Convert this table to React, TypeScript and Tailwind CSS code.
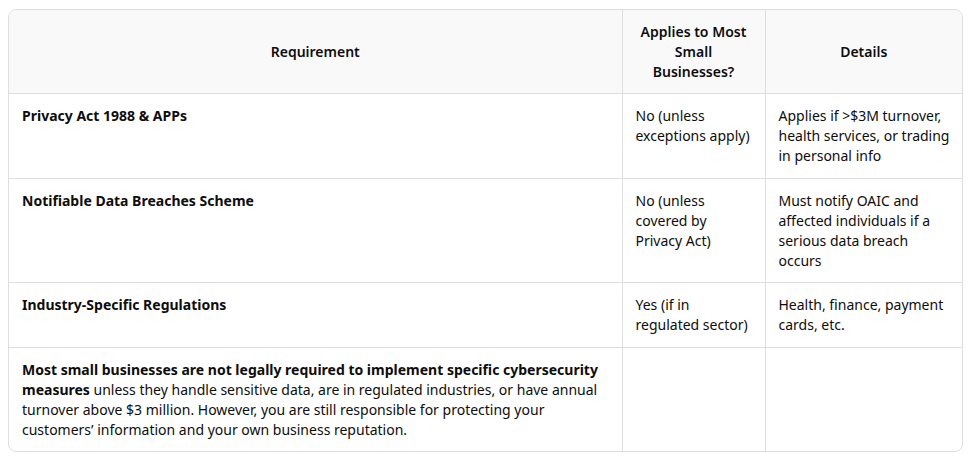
import React from "react";

const rows = [
  {
    req: "Privacy Act 1988 & APPs",
    applies: "No (unless exceptions apply)",
    details: ["Applies if >$3M turnover,", "health services, or trading", "in personal info"],
    pad: "pt-3 pb-3",
  },
  {
    req: "Notifiable Data Breaches Scheme",
    applies: "No (unless covered by Privacy Act)",
    details: ["Must notify OAIC and", "affected individuals if a", "serious data breach", "occurs"],
    pad: "pt-3 pb-[11px]",
  },
  {
    req: "Industry-Specific Regulations",
    applies: "Yes (if in regulated sector)",
    details: ["Health, finance, payment", "cards, etc."],
    pad: "pt-3 pb-3",
  },
];

export default function App() {
  return (
    <div
      className="bg-white w-[972px] h-[457px] pl-2 pr-[9px] pt-[9px] text-[14px] leading-5 text-[#0d0d0d]"
      style={{ fontFamily: '"Noto Sans", "Open Sans", sans-serif' }}
    >
      <div className="border border-[#dedede] rounded-lg overflow-hidden">
        <table className="w-full table-fixed border-collapse">
          <colgroup>
            <col className="w-[613px]" />
            <col className="w-[143px]" />
            <col />
          </colgroup>
          <thead>
            <tr className="bg-[#f9f9f9]">
              <th className="font-semibold text-center align-middle px-[13px] pt-3 pb-[11px] border-b border-r border-[#dedede]">
                Requirement
              </th>
              <th className="font-semibold text-center align-middle px-[13px] pt-3 pb-[11px] border-b border-r border-[#dedede]">
                Applies to Most Small Businesses?
              </th>
              <th className="font-semibold text-center align-middle px-[13px] pt-3 pb-[11px] border-b border-[#dedede]">
                Details
              </th>
            </tr>
          </thead>
          <tbody>
            {rows.map((r) => (
              <tr key={r.req}>
                <td className={`align-top px-[13px] ${r.pad} border-b border-r border-[#dedede] font-bold`}>
                  {r.req}
                </td>
                <td className={`align-top px-[13px] ${r.pad} border-b border-r border-[#dedede]`}>
                  {r.applies}
                </td>
                <td className={`align-top pl-[13px] pr-1 ${r.pad} border-b border-[#dedede]`}>
                  {r.details.map((line, i) => (
                    <div key={i} className="whitespace-nowrap">
                      {line}
                    </div>
                  ))}
                </td>
              </tr>
            ))}
            <tr>
              <td className="align-top px-[13px] pt-3 pb-[11px] border-r border-[#dedede]">
                <strong className="font-bold">
                  Most small businesses are not legally required to implement specific cybersecurity measures
                </strong>{" "}
                unless they handle sensitive data, are in regulated industries, or have annual turnover above $3
                million. However, you are still responsible for protecting your customers’ information and your
                own business reputation.
              </td>
              <td className="align-top px-[13px] pt-3 pb-[11px] border-r border-[#dedede]"></td>
              <td className="align-top px-[13px] pt-3 pb-[11px]"></td>
            </tr>
          </tbody>
        </table>
      </div>
    </div>
  );
}
